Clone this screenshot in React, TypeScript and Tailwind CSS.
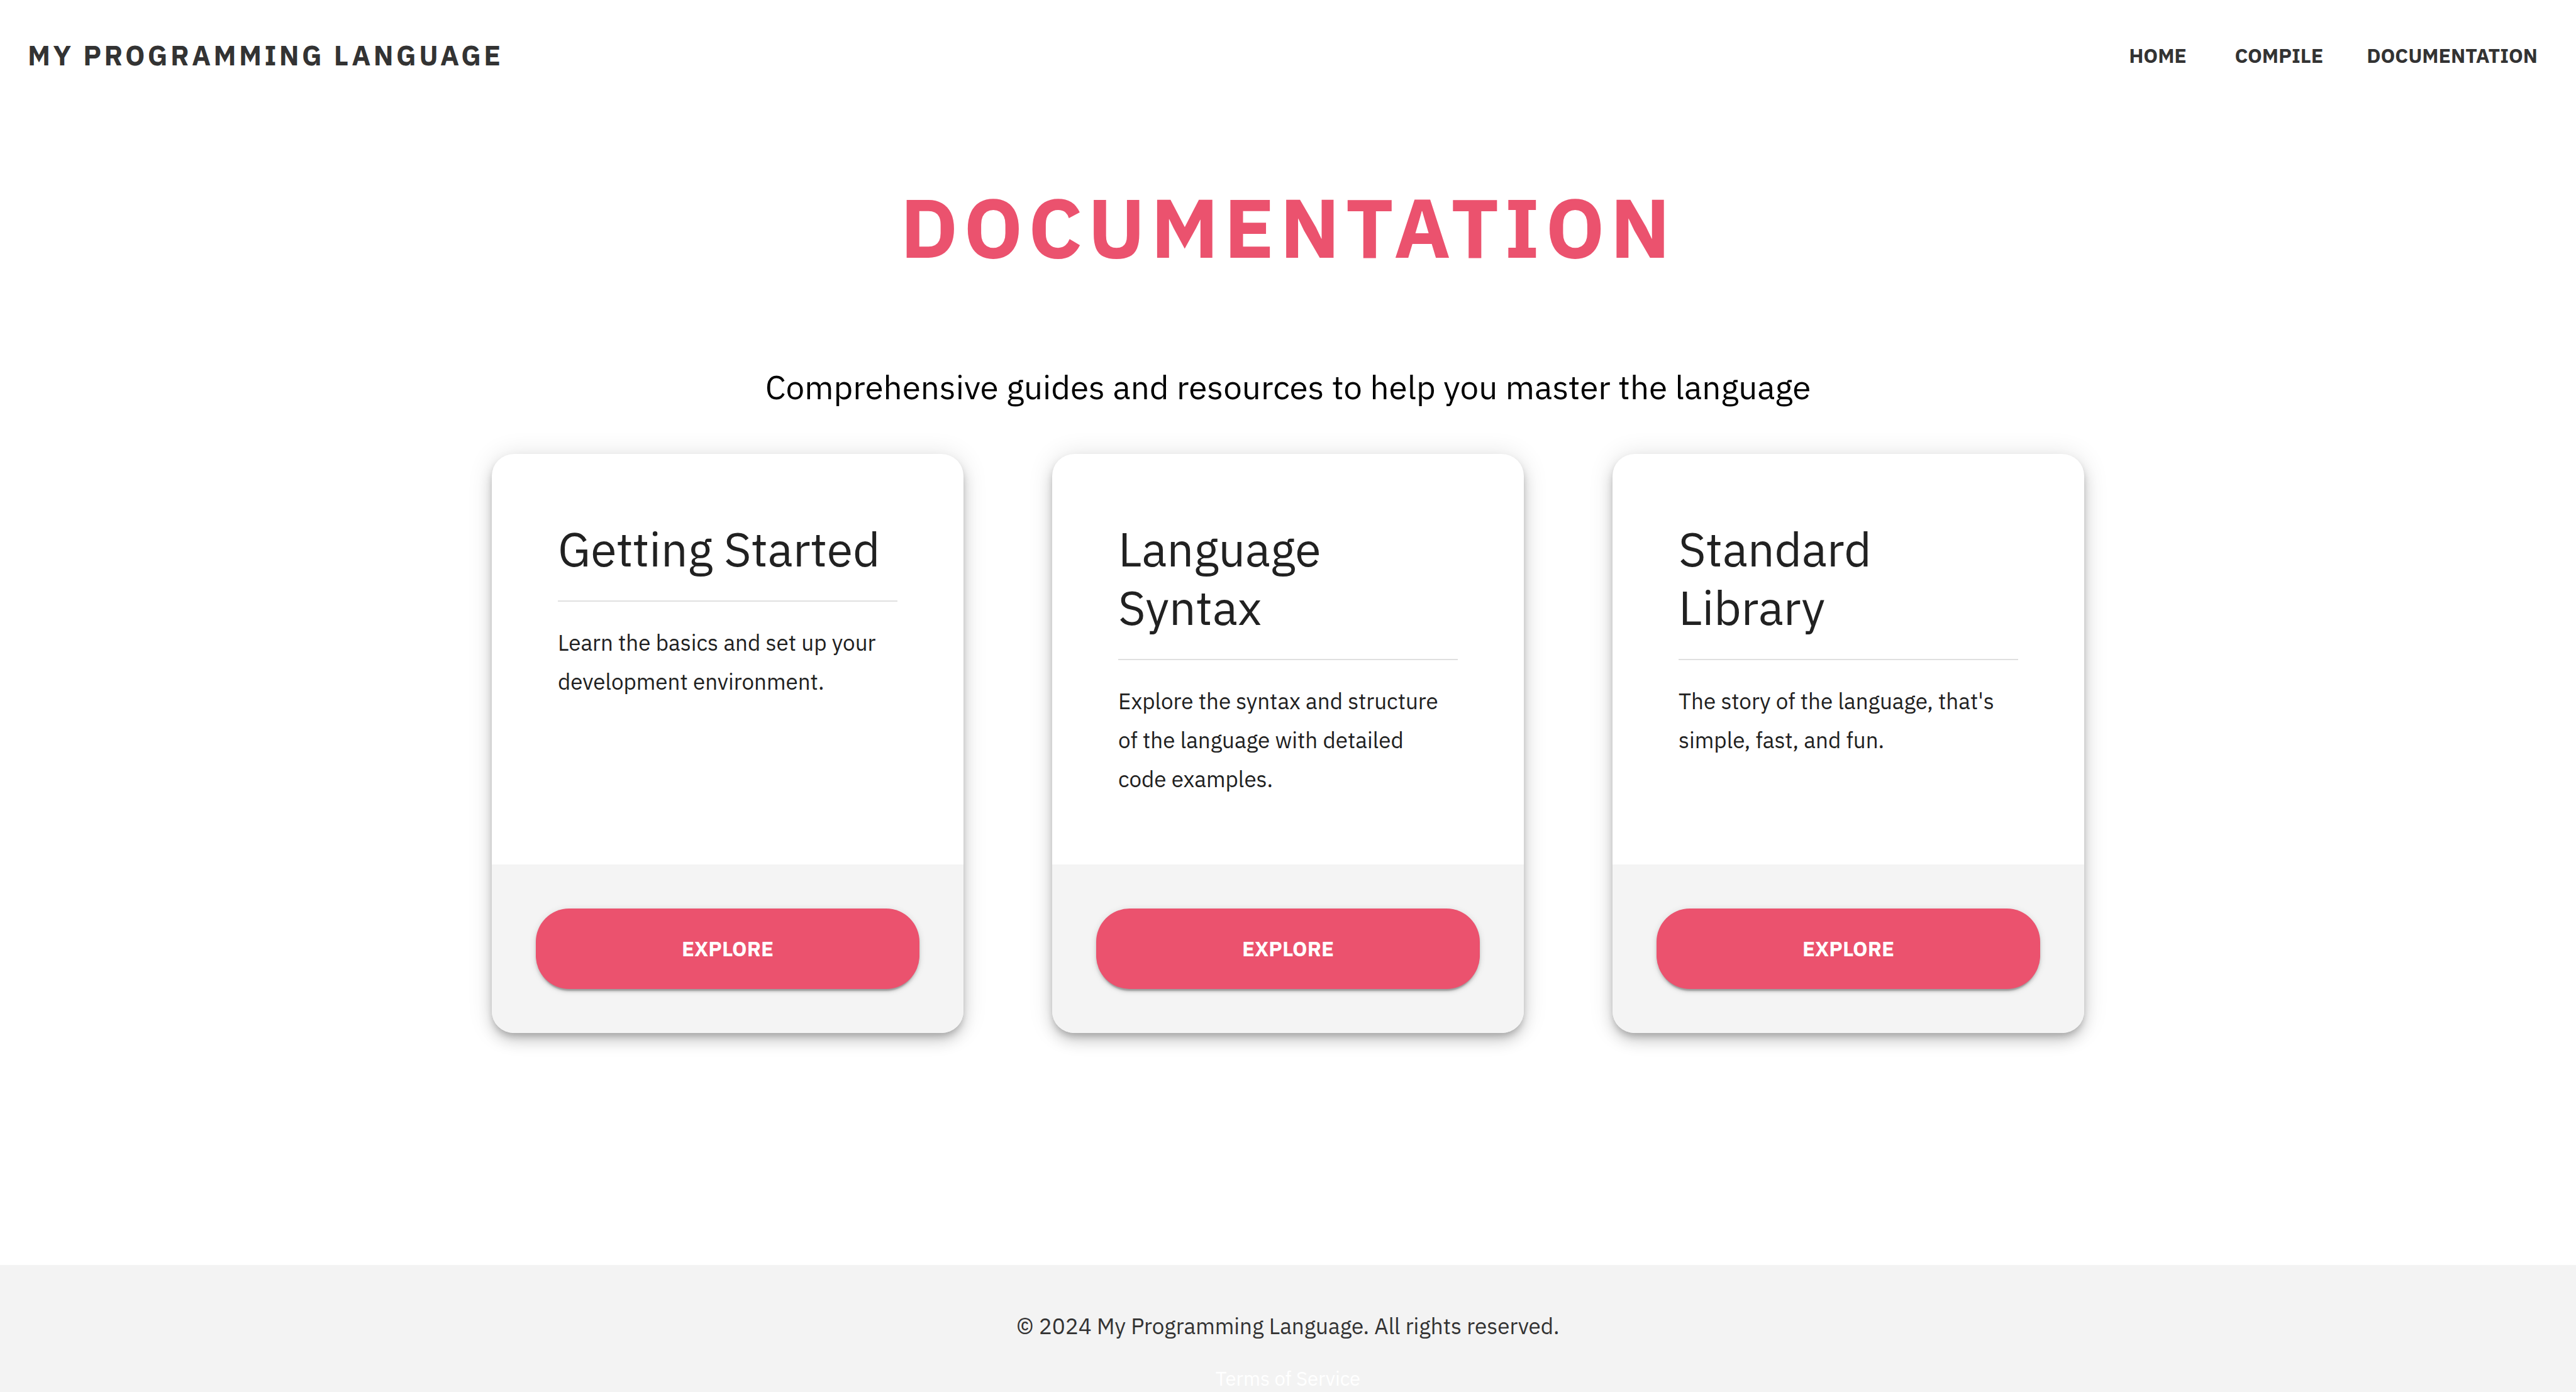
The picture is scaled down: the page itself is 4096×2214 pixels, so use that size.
type Guide = { title: string; text: string };

const guides: Guide[] = [
  { title: 'Getting Started', text: 'Learn the basics and set up your development environment.' },
  { title: 'Language Syntax', text: 'Explore the syntax and structure of the language with detailed code examples.' },
  { title: 'Standard Library', text: "The story of the language, that's simple, fast, and fun." },
];

const links = ['Home', 'Compile', 'Documentation'];

function Header() {
  return (
    <header className="flex items-center justify-between px-[44px] py-[55px] text-[#333333]">
      <a href="#" className="text-[44px] leading-[66px] font-bold tracking-[0.1em] uppercase">
        My Programming Language
      </a>
      <nav className="flex gap-[35px]">
        {links.map((link) => (
          <a
            key={link}
            href={`#${link.toLowerCase()}`}
            className="min-w-[141px] px-[17px] text-center text-[32px] leading-[64px] font-bold uppercase"
          >
            {link}
          </a>
        ))}
      </nav>
    </header>
  );
}

function GuideCard({ title, text }: Guide) {
  return (
    <article className="flex flex-col overflow-hidden rounded-[35px] bg-white text-[#212121] shadow-[0_7px_11px_-2px_rgba(0,0,0,0.2),0_13px_22px_0_rgba(0,0,0,0.14),0_2px_40px_0_rgba(0,0,0,0.12)]">
      <div className="flex-1 p-[105px]">
        <h2 className="text-[75px] leading-[93px]">{title}</h2>
        <hr className="mt-[35px] mb-[34px] border-t-2 border-[#e0e0e0]" />
        <p className="pr-2 text-[35px] leading-[62px]">{text}</p>
      </div>
      <div className="bg-[#f4f4f4] p-[70px]">
        <button
          type="button"
          className="w-full rounded-[53px] bg-[#eb526e] py-[35px] text-[33px] leading-[58px] font-bold text-white uppercase shadow-[0_7px_2px_-4px_rgba(0,0,0,0.2),0_4px_4px_0_rgba(0,0,0,0.14),0_2px_11px_0_rgba(0,0,0,0.12)]"
        >
          Explore
        </button>
      </div>
    </article>
  );
}

export default function App() {
  return (
    <div className="flex min-h-screen flex-col bg-white font-['IBM_Plex_Sans','Noto_Sans',sans-serif]">
      <Header />
      <main className="px-[44px] pt-[106px] pb-[369px] text-center">
        <h1 className="text-[132px] leading-[158px] font-bold tracking-[0.065em] text-[#eb526e] uppercase">
          Documentation
        </h1>
        <p className="mt-[136px] text-[53px] leading-[80px] text-black">
          Comprehensive guides and resources to help you master the language
        </p>
        <section className="mx-auto mt-[66px] grid max-w-[2532px] grid-cols-3 gap-[141px] text-left">
          {guides.map((guide) => (
            <GuideCard key={guide.title} {...guide} />
          ))}
        </section>
      </main>
      <footer className="flex flex-1 flex-col items-center bg-[#f3f3f3] pt-[71px]">
        <p className="text-[35px] leading-[53px] text-[#333333]">
          © 2024 My Programming Language. All rights reserved.
        </p>
        <a href="#terms" className="mt-[37px] text-[31px] leading-[40px] text-white">
          Terms of Service
        </a>
      </footer>
    </div>
  );
}
